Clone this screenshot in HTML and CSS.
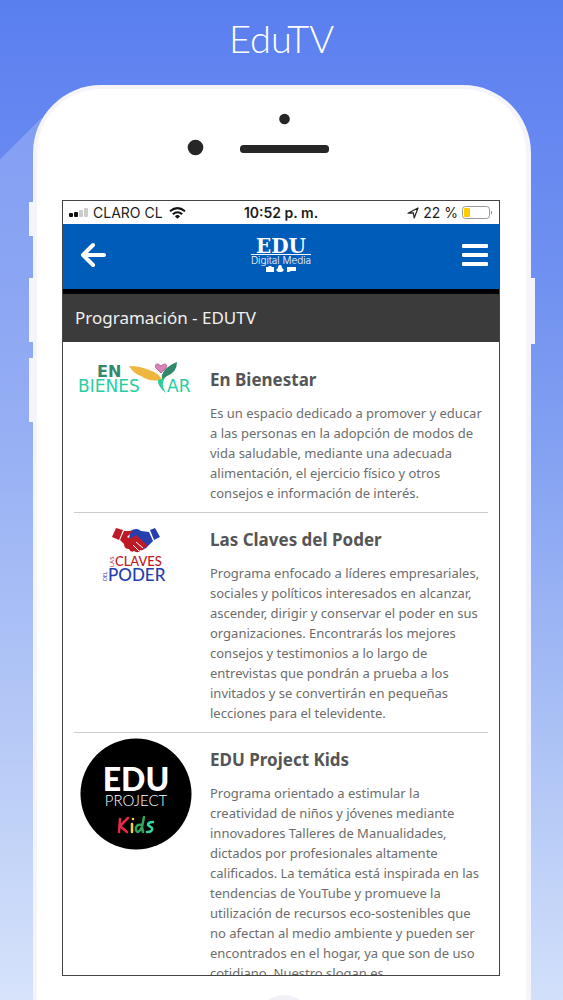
FILE: index.html
```html
<!DOCTYPE html>
<html lang="es">
<head>
<meta charset="utf-8">
<meta name="viewport" content="width=device-width, initial-scale=1">
<title>EduTV</title>
<link rel="stylesheet" href="styles.css">
</head>
<body>
<div class="page">
  <h1 class="page-title">EduTV</h1>
  <div class="phone">
    <span class="side-key key-mute"></span>
    <span class="side-key key-up"></span>
    <span class="side-key key-down"></span>
    <span class="side-key key-power"></span>
    <svg class="sensors" viewBox="0 0 180 44" aria-hidden="true">
      <circle cx="95.500" cy="6" r="5.300" fill="#262626"/>
      <circle cx="6.500" cy="34.500" r="7.800" fill="#262626"/>
      <rect x="51" y="32" width="89" height="8" rx="3.500" fill="#262626"/>
    </svg>
    <main class="screen">
      <div class="status">
        <div class="status-side">
          <svg width="20" height="10" viewBox="0 0 20 10" aria-hidden="true">
            <rect x="0" y="5" width="4" height="4" rx="1" fill="#111"/><rect x="5" y="4" width="4" height="5" rx="1" fill="#111"/>
            <rect x="10" y="2" width="4" height="7" rx="1" fill="#ccc"/><rect x="15" y="0" width="4" height="9" rx="1" fill="#ccc"/>
          </svg>
          <span>CLARO CL</span>
          <svg class="wifi" width="17" height="12" viewBox="0 0 17 12" fill="none" stroke="#111" stroke-width="2" aria-hidden="true">
            <path d="M1 4.200Q8.500-2 16 4.200M3.800 7.200Q8.500 3.200 13.200 7.200"/><path d="M5.900 9.200Q8.500 7 11.100 9.200L8.500 11.800Z" fill="#111" stroke="none"/>
          </svg>
        </div>
        <strong>10:52 p. m.</strong>
        <div class="status-side status-right">
          <svg width="12" height="12" viewBox="0 0 12 12" fill="none" stroke="#222" stroke-width="1.200" stroke-linejoin="round" aria-hidden="true"><path d="M1 6.200L11 1L7.200 11L6.400 5.900Z"/></svg>
          <span>22 %</span>
          <svg width="31" height="14" viewBox="0 0 31 14" aria-hidden="true">
            <rect x=".5" y=".5" width="27" height="12" rx="3" fill="#fff" stroke="#999"/><rect x="2" y="2" width="6" height="9" rx="1" fill="#fc0"/><path d="M29 4.500Q31 6.500 29 8.500Z" fill="#777"/>
          </svg>
        </div>
      </div>
      <header class="bar">
        <button class="icon-button back" type="button" aria-label="Volver">
          <svg width="26" height="26" viewBox="0 0 26 26" fill="none" stroke="#fff" stroke-width="4" stroke-linecap="round" stroke-linejoin="round"><path d="M13 3L3 13L13 23M4 13H24"/></svg>
        </button>
        <svg class="brand" width="64" height="44" viewBox="0 0 64 44" role="img" aria-label="EDU Digital Media">
          <text x="32" y="20" class="brand-edu">EDU</text>
          <rect x="2" y="21" width="60" height="1" fill="#fff"/>
          <text x="32" y="31" class="brand-sub">Digital Media</text>
          <g fill="#fff"><path d="M17 34h2l1-1h2l1 1h2v5h-8z"/><path d="M31 32q2 0 2 3l2 2-2 2h-4l-2-2 2-2q0-3 2-3z"/><path d="M38 34h9v4h-5l-2 1h-2z"/></g>
        </svg>
        <button class="icon-button menu" type="button" aria-label="Menú">
          <svg width="26" height="26" viewBox="0 0 26 26" fill="#fff"><rect y="2" width="26" height="4" rx="1"/><rect y="11" width="26" height="4" rx="1"/><rect y="20" width="26" height="4" rx="1"/></svg>
        </button>
      </header>
      <h2 class="section-title">Programación - EDUTV</h2>
      <div class="programs">
        <article class="program">
          <svg class="logo" viewBox="0 0 124 112" role="img" aria-label="En Bienestar">
            <text x="23" y="19" class="logo-en">EN</text>
            <text x="4" y="34" class="logo-bien">BIENES</text>
            <text x="93" y="34" class="logo-bien">AR</text>
            <path d="M55 8Q66 8 75 12Q85 15 88 22Q75 24 67 18Q60 16 55 8Z" fill="#eeb63e"/>
            <path d="M88 22Q86 11 103 4Q103 14 93 18Z" fill="#31886c"/>
            <path d="M84 22L91 20Q86 26 92 35Q83 28 84 22Z" fill="#2bcf9e"/>
            <path d="M87 15L82 10Q80 6 84 6L87 8L90 6Q94 6 92 10Z" fill="#d984b8" stroke="#b96a9d"/>
          </svg>
          <div class="program-text">
            <h3>En Bienestar</h3>
            <p>Es un espacio dedicado a promover y educar a las personas en la adopción de modos de vida saludable, mediante una adecuada alimentación, el ejercicio físico y otros consejos e información de interés.</p>
          </div>
        </article>
        <article class="program">
          <svg class="logo" viewBox="0 0 124 112" role="img" aria-label="Las Claves del Poder">
            <g transform="translate(-2 5)">
              <path d="M44 5L51 7L47 17L40 14Z" fill="#bd1a26"/>
              <path d="M78 7L83 5L88 14L82 17Z" fill="#263fac"/>
              <path d="M58 8Q65 4 69 8L77 9L81 18L76 23Q73 28 68 25L57 17Z" fill="#263fac"/>
              <path d="M52 8L61 8L55 14Q59 17 64 12L75 22Q75 26 71 24Q73 28 68 27Q67 31 62 28Q59 30 57 26Q52 26 52 21L48 17Z" fill="#bd1a26"/>
              <path d="M64 19L71 25M61 22L67 28" stroke="#fff" fill="none"/>
            </g>
            <text x="41" y="48" class="logo-claves">CLAVES</text>
            <text x="34" y="63" class="logo-poder">PODER</text>
            <text transform="translate(40 49) rotate(-90)" class="logo-las">LAS</text>
            <text transform="translate(33 63) rotate(-90)" class="logo-del">DEL</text>
          </svg>
          <div class="program-text">
            <h3>Las Claves del Poder</h3>
            <p>Programa enfocado a líderes empresariales, sociales y políticos interesados en alcanzar, ascender, dirigir y conservar el poder en sus organizaciones. Encontrarás los mejores consejos y testimonios a lo largo de entrevistas que pondrán a prueba a los invitados y se convertirán en pequeñas lecciones para el televidente.</p>
          </div>
        </article>
        <article class="program">
          <svg class="logo" viewBox="0 0 124 112" role="img" aria-label="EDU Project Kids">
            <circle cx="62" cy="56" r="55.500" fill="#000"/>
            <text x="62" y="53" class="logo-edu">EDU</text>
            <text x="62" y="68" class="logo-project">PROJECT</text>
            <g fill="none" stroke-width="2.500" stroke-linecap="round" stroke-linejoin="round">
              <path d="M46 81L45 94M54 80L46 88L53 94" stroke="#e32b43"/>
              <path d="M58 86L58 94M59 81v.1" stroke="#f5d432"/>
              <path d="M68 87Q61 86 62 92Q64 97 68 89L70 79M68 89L69 94" stroke="#35a35a"/>
              <path d="M79 84Q74 84 74 87L78 90Q79 94 73 94" stroke="#36d6a0"/>
            </g>
          </svg>
          <div class="program-text">
            <h3>EDU Project Kids</h3>
            <p>Programa orientado a estimular la creatividad de niños y jóvenes mediante innovadores Talleres de Manualidades, dictados por profesionales altamente calificados. La temática está inspirada en las tendencias de YouTube y promueve la utilización de recursos eco-sostenibles que no afectan al medio ambiente y pueden ser encontrados en el hogar, ya que son de uso cotidiano. Nuestro slogan es</p>
          </div>
        </article>
      </div>
    </main>
    <div class="chin"><span class="home"></span></div>
  </div>
</div>
</body>
</html>
```
FILE: styles.css
```css
* { box-sizing: border-box; }
body { margin: 0; font-family: "Noto Sans", sans-serif; color: #666; }
h1, h2, h3, p { margin: 0; }

.page {
  display: flex;
  flex-direction: column;
  height: 100vh;
  overflow: hidden;
  background:
    linear-gradient(135deg, transparent 50%, rgba(255, 255, 255, .2) 50%) 0 118px / 42px 42px no-repeat,
    linear-gradient(rgba(255, 255, 255, .2), rgba(255, 255, 255, .08)) 0 160px / 42px 100% no-repeat,
    linear-gradient(#597fef, #6284f0 85px, #7091f0 280px, #82a0f2 440px, #a9c0f5 720px, #d2e0fa);
}
.page-title {
  flex: none;
  height: 85px;
  padding-top: 16px;
  color: #fff;
  font: 300 38px/44px Lato, sans-serif;
  text-align: center;
}
.phone {
  position: relative;
  display: flex;
  flex: 1;
  flex-direction: column;
  min-height: 0;
  margin: 0 32px 0 33px;
  padding: 28px 26px 0 25px;
  border: solid #f4f4fa;
  border-width: 4px 5px 0 4px;
  border-radius: 68px 68px 0 0;
  background: #fff;
}
.side-key { position: absolute; left: -8px; width: 4px; background: #f4f4fa; }
.key-mute { top: 113px; height: 34px; }
.key-up { top: 189px; height: 64px; }
.key-down { top: 269px; height: 64px; }
.key-power { top: 189px; right: -9px; left: auto; height: 66px; }
.sensors { flex: none; align-self: center; width: 180px; height: 44px; margin: -4px 5px 43px 0; overflow: visible; }

.screen {
  display: flex;
  flex: 1;
  flex-direction: column;
  min-height: 0;
  overflow: hidden;
  border: 1px solid #444;
}
.status {
  display: grid;
  flex: none;
  grid-template-columns: 1fr auto 1fr;
  align-items: center;
  height: 23px;
  padding: 0 6px;
  color: #1c1c1c;
  font: 14px/22px Inter, sans-serif;
}
.status strong { font-weight: 600; }
.status-side { display: flex; gap: 4px; align-items: center; white-space: nowrap; }
.status-right { justify-content: flex-end; }
.wifi { margin-left: 2px; }

.bar {
  display: grid;
  flex: none;
  grid-template-columns: 1fr auto 1fr;
  align-items: center;
  height: 70px;
  padding: 0 11px 4px;
  border-bottom: 5px solid #000;
  background: #005cb9;
}
.icon-button { display: flex; padding: 0; border: 0; background: none; }
.back { justify-self: start; margin-left: 6px; }
.menu { justify-self: end; }
.brand { overflow: visible; }
.brand-edu { fill: #fff; font: bold 20px "DejaVu Serif", serif; text-anchor: middle; }
.brand-sub { fill: #fff; font: 300 10px Inter, sans-serif; text-anchor: middle; }

.section-title {
  flex: none;
  padding: 12px;
  background: #3c3b3b;
  color: #f0f0f0;
  font-size: 17px;
  font-weight: 400;
  line-height: 24px;
}
.programs { padding: 11px 11px 0; }
.program {
  display: grid;
  grid-template-columns: 124px 1fr;
  gap: 12px;
  padding-bottom: 9px;
  border-bottom: 1px solid #ccc;
}
.logo { width: 100%; margin-top: 5px; }
.program-text { padding-top: 14px; }
.program h3 { font-size: 17px; line-height: 26px; font-weight: 700; color: #555; }
.program p { padding-top: 10px; font-size: 13px; line-height: 20px; color: #6d6d6d; }

.logo-en { fill: #34886c; font: bold 16px "DejaVu Sans", sans-serif; }
.logo-bien { fill: #27cfa0; font: 17px "DejaVu Sans", sans-serif; }
.logo-claves { fill: #bd1a26; font: 500 13px Lato, sans-serif; }
.logo-poder { fill: #263fac; font: 500 17px Lato, sans-serif; }
.logo-las { fill: #bd1a26; font: 6px Lato, sans-serif; }
.logo-del { fill: #263fac; font: 5px Lato, sans-serif; }
.logo-edu { fill: #fff; font: 900 32px Lato, sans-serif; text-anchor: middle; }
.logo-project { fill: #fff; font: 300 15px Lato, sans-serif; text-anchor: middle; }

.chin { flex: none; height: 24px; overflow: hidden; padding: 19px 0 0 6px; }
.home { display: block; width: 56px; height: 56px; margin: 0 auto; border-radius: 50%; background: #f1f0f6; }
```
